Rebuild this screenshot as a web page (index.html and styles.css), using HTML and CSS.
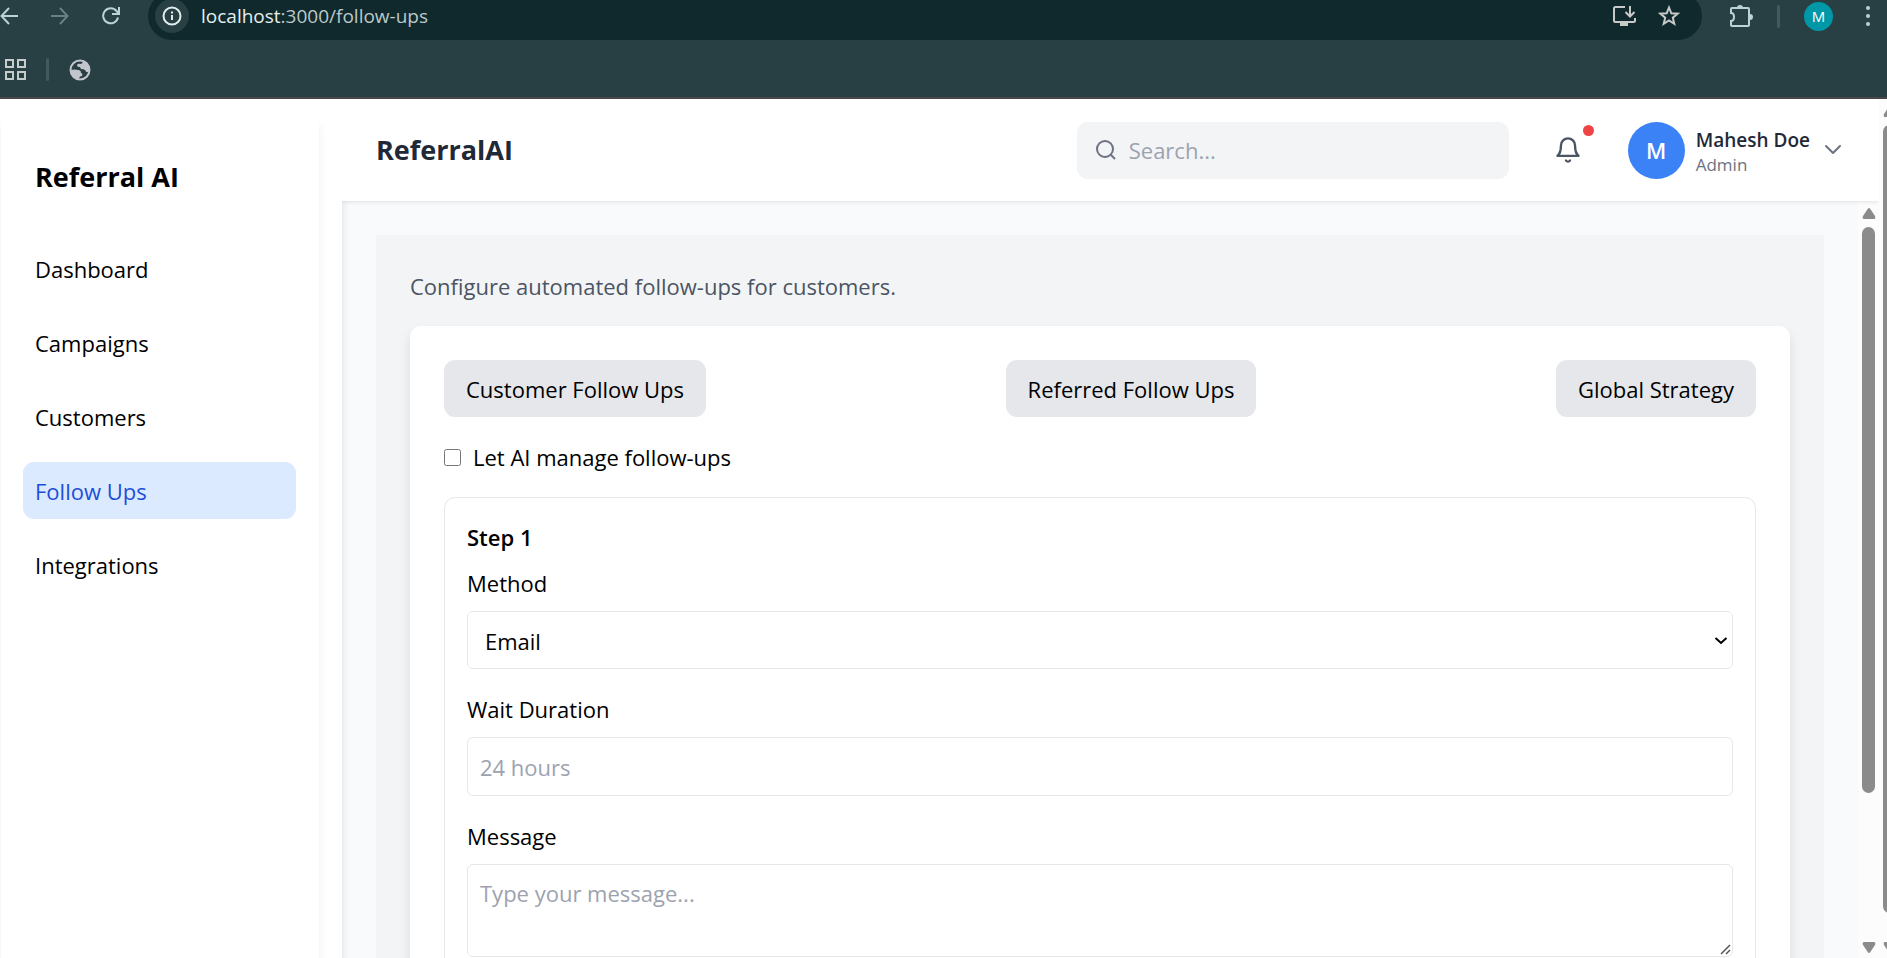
FILE: index.html
```html
<!DOCTYPE html>
<html lang="en">
<head>
<meta charset="utf-8">
<title>ReferralAI</title>
<link rel="stylesheet" href="styles.css">
</head>
<body>
<div class="browser">
  <div class="toolbar">
    <div class="nav-buttons">
      <button class="tool" aria-label="Back"><svg width="18" height="18" viewBox="0 0 18 18" fill="none" stroke="#bcd3d5" stroke-width="2"><path d="M18 9H2M9 1L1.500 9L9 17"/></svg></button>
      <button class="tool" aria-label="Forward"><svg width="18" height="18" viewBox="0 0 18 18" fill="none" stroke="#6b7f82" stroke-width="2"><path d="M0 9H16M9 1L16.500 9L9 17"/></svg></button>
      <button class="tool" aria-label="Reload"><svg width="18" height="18" viewBox="0 0 18 18" fill="none" stroke="#bcd3d5" stroke-width="2"><path d="M16 10.500A7.500 7.500 0 1 1 14.500 4L16.500 6M17 0V7H10"/></svg></button>
    </div>
    <div class="address">
      <span class="info"><svg width="20" height="20" viewBox="0 0 20 20" fill="none" stroke="#e3ecec" stroke-width="2"><circle cx="10" cy="10" r="8.500"/><path d="M10 9v5M10 5.500v2"/></svg></span>
      <span class="url">localhost<span class="url-path">:3000/follow-ups</span></span>
      <button class="tool" aria-label="Install app"><svg width="24" height="22" viewBox="0 0 24 22" fill="none" stroke="#c8c9c9" stroke-width="2"><path d="M13 2H3.500Q2 2 2 3.500V15.500Q2 17 3.500 17H21.500Q23 17 23 15.500V13M18 1V11M13.500 7L18 11.500L22.500 7"/><path d="M8 19.500H16" stroke-width="3"/></svg></button>
      <button class="tool" aria-label="Bookmark"><svg width="22" height="22" viewBox="0 0 22 22" fill="none" stroke="#c8c9c9" stroke-width="2"><path d="M11 2.500L13.300 8.300L19.600 8.700L14.800 12.700L16.300 18.900L11 15.500L5.700 18.900L7.200 12.700L2.400 8.700L8.700 8.300Z"/></svg></button>
    </div>
    <div class="right-tools">
      <button class="tool" aria-label="Extensions"><svg width="24" height="24" viewBox="0 0 24 24" fill="none" stroke="#bcd3d5" stroke-width="2"><path d="M3 4H19Q20 4 20 5V21Q20 22 19 22H3Q2 22 2 21V17C6 17 6 9 2 9V5Q2 4 3 4Z"/><path fill="#bcd3d5" stroke="none" d="M8 4a3 3 0 0 1 6 0zM21 10a3 3 0 0 1 0 6z"/></svg></button>
      <span class="tool-divider"></span>
      <button class="profile" aria-label="Profile">M</button>
      <button class="tool" aria-label="Menu"><svg width="6" height="20" viewBox="0 0 6 20" fill="#bcd3d5"><circle cx="3" cy="2" r="2"/><circle cx="3" cy="10" r="2"/><circle cx="3" cy="18" r="2"/></svg></button>
    </div>
  </div>
  <div class="bookmarks">
    <button class="tool" aria-label="Apps"><svg width="21" height="21" viewBox="0 0 21 21" fill="none" stroke="#c4cccc" stroke-width="2"><path d="M1 1h7v7H1zM13 1h7v7h-7zM1 13h7v7H1zM13 13h7v7h-7z"/></svg></button>
    <span class="tool-divider"></span>
    <button class="tool" aria-label="Website"><svg width="22" height="22" viewBox="0 0 22 22"><circle cx="11" cy="11" r="9.500" fill="none" stroke="#c3c5cd" stroke-width="2"/><path fill="#c3c5cd" d="M14 1.500Q20 4 21 11L20 13Q17 14 16 11Q15 10 12 10L11 8Q8 8 8 6Q9 4 12 5Q14 4 14 1.500ZM1.500 11Q6 10 9 11Q12 11 12 14Q14 14 13 17Q10 17 10 20.500Q3 19 1.500 11Z"/></svg></button>
  </div>
</div>

<div class="app">
  <aside class="sidebar">
    <h2 class="brand">Referral AI</h2>
    <nav class="menu">
      <a class="link" href="#">Dashboard</a>
      <a class="link" href="#">Campaigns</a>
      <a class="link" href="#">Customers</a>
      <a class="link active" href="#">Follow Ups</a>
      <a class="link" href="#">Integrations</a>
    </nav>
  </aside>

  <div class="page">
    <header class="header">
      <h1 class="title">ReferralAI</h1>
      <div class="header-tools">
        <label class="search">
          <svg width="22" height="22" viewBox="0 0 22 22" fill="none" stroke="#6b7280" stroke-width="2"><circle cx="10" cy="10" r="8"/><path d="M16 16L20 20"/></svg>
          <input type="text" placeholder="Search..." aria-label="Search">
        </label>
        <button class="bell" aria-label="Notifications">
          <svg width="28" height="28" viewBox="0 0 24 24" fill="none" stroke="#4b5563" stroke-width="2" stroke-linecap="round" stroke-linejoin="round"><path d="M18 8A6 6 0 0 0 6 8c0 7-3 9-3 9h18s-3-2-3-9M13.730 21a2 2 0 0 1-3.460 0"/></svg>
          <span class="dot"></span>
        </button>
        <button class="user">
          <span class="avatar">M</span>
          <span class="who"><span class="name">Mahesh Doe</span><span class="role">Admin</span></span>
          <svg width="24" height="24" viewBox="0 0 24 24" fill="none" stroke="#6b7280" stroke-width="2" stroke-linecap="round" stroke-linejoin="round"><path d="M5 8l7 7 7-7"/></svg>
        </button>
      </div>
    </header>
    <div class="scroll-area">
      <main class="content">
        <section class="panel">
          <p class="intro">Configure automated follow-ups for customers.</p>
          <div class="card">
            <div class="tabs">
              <button class="tab">Customer Follow Ups</button>
              <button class="tab">Referred Follow Ups</button>
              <button class="tab">Global Strategy</button>
            </div>
            <label class="check"><input type="checkbox">Let AI manage follow-ups</label>
            <div class="step">
              <h3 class="step-title">Step 1</h3>
              <div class="field">
                <label for="method">Method</label>
                <div class="control">
                  <select id="method"><option>Email</option></select>
                  <svg class="arrow" width="14" height="10" viewBox="0 0 14 10" fill="none" stroke="#000" stroke-width="2"><path d="M1.500 2L7 7L12.500 2"/></svg>
                </div>
              </div>
              <div class="field">
                <label for="wait">Wait Duration</label>
                <input id="wait" type="text" placeholder="24 hours">
              </div>
              <div class="field">
                <label for="message">Message</label>
                <div class="control">
                  <textarea id="message" placeholder="Type your message..."></textarea>
                  <svg class="grip" width="11" height="11" viewBox="0 0 11 11" fill="none" stroke="#555" stroke-width="1.500"><path d="M1 10L10 1M6 10L10 6"/></svg>
                </div>
              </div>
            </div>
          </div>
        </section>
      </main>
      <div class="scrollbar">
        <svg width="14" height="11" viewBox="0 0 14 11" fill="#8b8b8b"><path d="M7 0Q8 0 9 2L13 8Q14 11 12 11H2Q0 11 1 8L5 2Q6 0 7 0Z"/></svg>
        <span class="thumb thumb-inner"></span>
        <svg class="down" width="14" height="11" viewBox="0 0 14 11" fill="#8b8b8b"><path d="M7 11Q8 11 9 9L13 3Q14 0 12 0H2Q0 0 1 3L5 9Q6 11 7 11Z"/></svg>
      </div>
    </div>
  </div>

  <div class="scrollbar outer">
    <svg width="14" height="11" viewBox="0 0 14 11" fill="#8b8b8b"><path d="M7 0Q8 0 9 2L13 8Q14 11 12 11H2Q0 11 1 8L5 2Q6 0 7 0Z"/></svg>
    <span class="thumb thumb-outer"></span>
    <svg class="down" width="14" height="11" viewBox="0 0 14 11" fill="#8b8b8b"><path d="M7 11Q8 11 9 9L13 3Q14 0 12 0H2Q0 0 1 3L5 9Q6 11 7 11Z"/></svg>
  </div>
</div>
</body>
</html>
```
FILE: styles.css
```css
* { box-sizing: border-box; margin: 0; }

body {
  height: 100vh;
  display: flex;
  flex-direction: column;
  overflow: hidden;
  background: #fff;
  color: #000;
  font: 22px/34px "Segoe UI", "Open Sans", "Noto Sans", sans-serif;
}

button, input, select, textarea { font: inherit; color: inherit; border: 0; background: none; padding: 0; }
svg { display: block; flex: none; }
a { color: inherit; text-decoration: none; }
::placeholder { color: #9ca3af; opacity: 1; }

/* Browser chrome */
.browser { flex: none; background: #283f43; border-bottom: 2px solid #4a474b; }
.toolbar { display: flex; height: 40px; }
.tool { display: flex; flex: none; }
.nav-buttons { flex: none; display: flex; align-items: center; gap: 33px; width: 148px; height: 32px; }
.address {
  flex: 1;
  display: flex;
  align-items: center;
  gap: 22px;
  height: 48px;
  margin-top: -8px;
  padding: 0 22px 0 7px;
  border-radius: 24px;
  background: #10292d;
}
.info { display: grid; place-items: center; flex: none; width: 34px; height: 34px; border-radius: 50%; background: #283f43; }
.url { flex: 1; margin-left: -10px; font-size: 19px; color: #e6eeee; }
.url-path { color: #bcc8c8; }
.right-tools { flex: none; display: flex; align-items: center; height: 32px; gap: 24px; padding: 0 16px 0 27px; }
.tool-divider { flex: none; width: 3px; height: 23px; border-radius: 2px; background: #415a5f; }
.profile { width: 29px; height: 29px; border-radius: 50%; background: #0097a7; color: #fff; font-size: 15px; line-height: 29px; margin-right: 8px; }
.bookmarks { display: flex; align-items: center; gap: 20px; height: 57px; padding: 2px 5px 0; }

/* App frame */
.app { flex: 1; display: flex; min-height: 0; }
.sidebar {
  flex: none;
  width: 318px;
  margin: 21px 23px 0 1px;
  padding: 37px 23px 37px 22px;
  background: #fff;
  box-shadow: 0 6px 9px rgba(0, 0, 0, 0.07);
}
.brand { padding: 0 12px; font-size: 27px; line-height: 40px; font-weight: 700; }
.menu { display: flex; flex-direction: column; gap: 17px; margin-top: 43px; }
.link { padding: 12px 12px 11px; border-radius: 11px; }
.active { background: #dbeafe; color: #1d4ed8; }

.page { flex: 1; min-width: 0; display: flex; flex-direction: column; }
.header {
  z-index: 1;
  flex: none;
  display: flex;
  align-items: center;
  justify-content: space-between;
  height: 102px;
  padding: 0 34px;
  background: #fff;
  box-shadow: 0 1px 4px rgba(0, 0, 0, 0.10);
  clip-path: inset(0 0 -8px 0);
}
.title { font-size: 27px; line-height: 40px; color: #1f2937; }
.header-tools { display: flex; align-items: center; }
.search {
  display: flex;
  align-items: center;
  gap: 12px;
  width: 432px;
  height: 57px;
  padding: 0 18px;
  border-radius: 11px;
  background: #f3f4f6;
}
.search input { flex: 1; min-width: 0; outline: 0; }
.bell { position: relative; display: flex; margin: 0 46px 0 45px; }
.dot { position: absolute; top: -11px; right: -12px; width: 11px; height: 11px; border-radius: 50%; background: #ef4444; }
.user { display: flex; align-items: center; gap: 11px; text-align: left; }
.avatar { width: 57px; height: 57px; border-radius: 50%; background: #3b82f6; color: #fff; font-weight: 600; line-height: 57px; text-align: center; }
.who { display: flex; flex-direction: column; padding-top: 2px; }
.name { font-size: 19px; line-height: 26px; font-weight: 600; color: #1f2937; }
.role { font-size: 17px; line-height: 23px; color: #6b7280; }

.scroll-area { flex: 1; display: flex; min-height: 0; background: #f9fafb; }
.content { flex: 1; min-width: 0; overflow: hidden; padding: 34px; box-shadow: inset 8px 0 8px -8px rgba(0, 0, 0, 0.12); }
.panel { padding: 34px; background: #f3f4f6; }
.intro { color: #4b5563; margin-bottom: 23px; }
.card { padding: 34px; border-radius: 11px; background: #fff; box-shadow: 0 6px 12px rgba(0, 0, 0, 0.10); }
.tabs { display: flex; justify-content: space-between; }
.tab { height: 57px; padding: 0 22px; border-radius: 11px; background: #e5e7eb; }
.check { display: flex; align-items: center; gap: 12px; margin: 23px 0; }
.check input { flex: none; width: 17px; height: 17px; margin: 0; }
.step { padding: 22px; border: 1px solid #e5e7eb; border-radius: 11px; }
.step-title { font-size: 22px; font-weight: 600; margin-bottom: 12px; }
.field { display: flex; flex-direction: column; gap: 11px; margin-bottom: 23px; }
.field input, .field select, .field textarea {
  display: block;
  width: 100%;
  height: 59px;
  padding: 11px 12px;
  border: 1px solid #e5e7eb;
  border-radius: 6px;
  background: #fff;
}
.field select { appearance: none; height: 58px; padding: 2px 17px 0; }
.field textarea { height: 93px; resize: none; }
.control { position: relative; }
.arrow { position: absolute; right: 5px; top: 25px; }
.grip { position: absolute; right: 2px; bottom: 2px; }

/* Scrollbars */
.scrollbar { flex: none; display: flex; flex-direction: column; align-items: flex-start; gap: 8px; width: 21px; padding: 7px 4px 5px; background: #fcfcfc; }
.outer { width: 8px; overflow: hidden; }
.thumb { width: 13px; border-radius: 7px; background: #8b8b8b; }
.thumb-inner { height: 76%; }
.thumb-outer { height: 93%; }
.down { margin-top: auto; }
```
